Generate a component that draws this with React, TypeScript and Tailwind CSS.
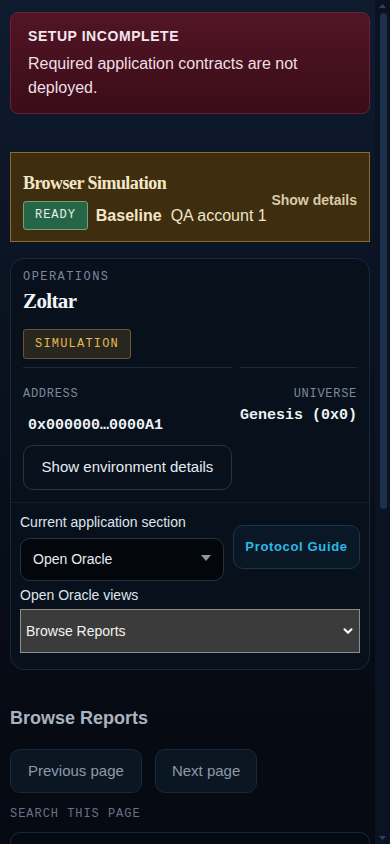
import { ChevronDown } from 'lucide-react';

const sans = 'font-["Liberation_Sans",Arial,sans-serif]';
const serif = 'font-["Liberation_Serif","Times_New_Roman",serif]';
const mono = 'font-["Liberation_Mono","DejaVu_Sans_Mono",monospace]';

function ScrollTrack() {
  return (
    <div className="flex w-[15px] shrink-0 flex-col items-center bg-[#0b1322]">
      <svg width="7" height="4" viewBox="0 0 7 4" className="mt-[4px]">
        <path d="M0 4L3.5 0L7 4z" fill="#2c4260" />
      </svg>
      <div className="mt-[5px] ml-[2px] h-[496px] w-[7px] rounded-full bg-[#1b304c]" />
      <div className="flex-1" />
      <svg width="7" height="4" viewBox="0 0 7 4" className="mb-[4px]">
        <path d="M0 0L3.5 4L7 0z" fill="#2c4260" />
      </svg>
    </div>
  );
}

export default function App() {
  return (
    <div className={`flex h-[844px] w-[390px] bg-[#060a13] ${sans}`}>
      <div className="flex-1 overflow-y-auto [scrollbar-width:none]">
        <div className="bg-[linear-gradient(180deg,#0f1b2f_0px,#0a1322_300px,#060a13_720px)] pl-[10px] pr-[5px] pt-[12px] pb-[40px]">
          {/* Setup warning */}
          <div className="rounded-[8px] border border-[#6a2035] bg-[linear-gradient(180deg,#521526_0%,#3b0c18_100%)] px-[17px] pt-[13px] pb-[13px]">
            <div className="text-[14px] leading-[20px] font-bold tracking-[0.04em] text-[#f3e7ee] uppercase">
              Setup incomplete
            </div>
            <p className="mt-[6px] text-[16px] leading-[24px] text-[#eedfe6]">
              Required application contracts are not deployed.
            </p>
          </div>

          {/* Simulation banner */}
          <div className="mt-[38px] flex items-center justify-between border border-[#8c6b2b] bg-[#3e2d0e] pl-[12px] pr-[12px] pt-[18px] pb-[11px]">
            <div>
              <div className={`${serif} text-[18px] leading-[24px] font-bold tracking-[-0.03em] text-[#f4e7c9]`}>
                Browser Simulation
              </div>
              <div className="mt-[6px] flex items-center gap-[8px]">
                <span
                  className={`${mono} rounded-[3px] border border-[#76a173] bg-[#256649] px-[11px] py-[6px] text-[12px] leading-[15px] tracking-[0.08em] text-[#e6efe6]`}
                >
                  READY
                </span>
                <span className="text-[16px] font-bold text-[#f4e7c9]">Baseline</span>
                <span className="ml-[1px] text-[16px] text-[#f1e4c7]">QA account 1</span>
              </div>
            </div>
            <button className="text-[14px] font-bold text-[#d9cba7]">Show details</button>
          </div>

          {/* Operations panel */}
          <div className="mt-[16px] rounded-[14px] border border-[#1c2838] bg-[#08101b]">
            <div className="px-[12px] pt-[10px] pb-[12px]">
              <div className={`${mono} text-[12px] leading-[16px] tracking-[0.12em] text-[#7b889b]`}>
                OPERATIONS
              </div>
              <div className={`${serif} mt-[3px] text-[21px] leading-[26px] font-bold tracking-[-0.03em] text-[#f2f5f8]`}>
                Zoltar
              </div>
              <div className="mt-[15px] flex">
                <span
                  className={`${mono} flex h-[30px] items-center rounded-[3px] border border-[#6a5628] bg-[#27261f] px-[11px] text-[12px] tracking-[0.1em] text-[#e8b94c]`}
                >
                  SIMULATION
                </span>
              </div>

              <div className="mt-[8px] grid grid-cols-[1fr_auto] gap-x-[8px]">
                <div className="border-t border-[#1c2838] pt-[18px]">
                  <div className={`${mono} text-[12px] leading-[16px] tracking-[0.06em] text-[#7b889b]`}>ADDRESS</div>
                  <div className={`${mono} mt-[14px] px-[5px] text-[15px] leading-[20px] font-bold text-[#eef2f6]`}>
                    0x000000…0000A1
                  </div>
                  <button className="mt-[9px] h-[45px] w-full rounded-[10px] border border-[#273446] text-[15px] text-[#e6ecf3]">
                    Show environment details
                  </button>
                </div>
                <div className="border-t border-[#1c2838] pt-[18px] text-right">
                  <div className={`${mono} text-[12px] leading-[16px] tracking-[0.06em] text-[#7b889b]`}>UNIVERSE</div>
                  <div className={`${mono} mt-[4px] text-[15px] leading-[20px] font-bold text-[#eef2f6]`}>
                    Genesis (0x0)
                  </div>
                </div>
              </div>
            </div>

            <div className="border-t border-[#141e2b] px-[9px] pt-[9px] pb-[16px]">
              <div className="grid grid-cols-[1fr_127px] items-center gap-x-[9px]">
                <div>
                  <div className="text-[14px] leading-[20px] text-[#dfe5ec]">Current application section</div>
                  <div className="mt-[6px] flex h-[43px] items-center justify-between rounded-[10px] border border-[#263244] bg-[#03060b] pl-[12px] pr-[12px]">
                    <span className="text-[14px] text-[#e8edf3]">Open Oracle</span>
                    <svg width="10" height="6" viewBox="0 0 10 6" className="mb-[4px]">
                      <path d="M0 0h10L5 6z" fill="#8b97a8" />
                    </svg>
                  </div>
                </div>
                <button className="h-[44px] rounded-[10px] border border-[#17374b] bg-[#0a1826] text-[13px] font-bold tracking-[0.05em] text-[#2db8e6]">
                  Protocol Guide
                </button>
              </div>
              <div className="mt-[4px] text-[14px] leading-[20px] text-[#dfe5ec]">Open Oracle views</div>
              <div className="mt-[4px] flex h-[44px] items-center justify-between border border-[#8e8e8e] bg-[#3b3b3b] pl-[5px] pr-[4px]">
                <span className="text-[14px] text-[#f2f2f2]">Browse Reports</span>
                <ChevronDown className="h-[14px] w-[14px] text-white" strokeWidth={3.5} />
              </div>
            </div>
          </div>

          {/* Browse reports */}
          <h2 className="mt-[36px] text-[18px] leading-[24px] font-bold text-[#a9b3bf]">Browse Reports</h2>
          <div className="mt-[19px] flex gap-[13px]">
            <button className="h-[44px] rounded-[10px] border border-[#1a2838] bg-[#0a1622] px-[17px] text-[15px] text-[#8d99aa]">
              Previous page
            </button>
            <button className="h-[44px] rounded-[10px] border border-[#1a2838] bg-[#0a1622] px-[16px] text-[15px] text-[#8d99aa]">
              Next page
            </button>
          </div>
          <div className={`${mono} mt-[13px] text-[12px] leading-[16px] tracking-[0.08em] text-[#677385]`}>
            SEARCH THIS PAGE
          </div>
          <div className="mt-[10px] h-[44px] w-full rounded-[10px] border border-[#1c2838] bg-[#050a12]" />
          <div className="mt-[16px] min-h-[460px] rounded-[10px] border border-[#141e2b] bg-[#070c15]" />
        </div>
      </div>
      <ScrollTrack />
    </div>
  );
}
